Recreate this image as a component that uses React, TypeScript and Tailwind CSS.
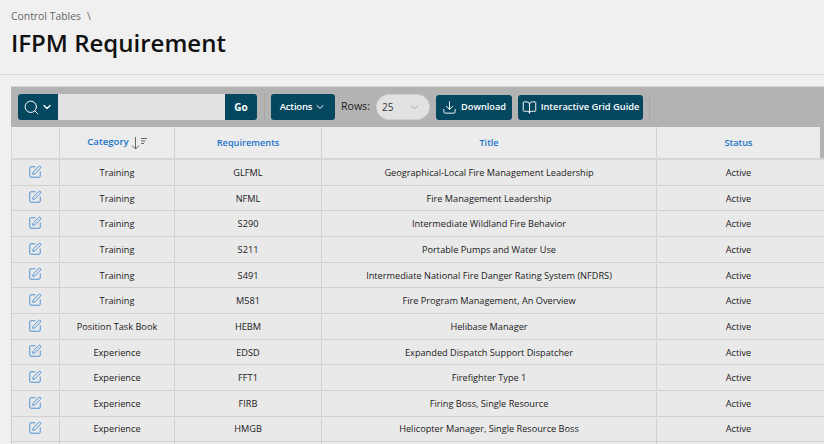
import React from 'react';
import { Search, ChevronDown, Download, BookOpen, SquarePen } from 'lucide-react';

const rows = [
  ['Training', 'GLFML', 'Geographical-Local Fire Management Leadership'],
  ['Training', 'NFML', 'Fire Management Leadership'],
  ['Training', 'S290', 'Intermediate Wildland Fire Behavior'],
  ['Training', 'S211', 'Portable Pumps and Water Use'],
  ['Training', 'S491', 'Intermediate National Fire Danger Rating System (NFDRS)'],
  ['Training', 'M581', 'Fire Program Management, An Overview'],
  ['Position Task Book', 'HEBM', 'Helibase Manager'],
  ['Experience', 'EDSD', 'Expanded Dispatch Support Dispatcher'],
  ['Experience', 'FFT1', 'Firefighter Type 1'],
  ['Experience', 'FIRB', 'Firing Boss, Single Resource'],
  ['Experience', 'HMGB', 'Helicopter Manager, Single Resource Boss'],
];

const cols = 'grid grid-cols-[48px_115px_147px_335px_167px]';
const cell = 'flex items-center justify-center border-r border-[#d0d0d0]';

const SortIcon = () => (
  <svg width="16" height="14" viewBox="0 0 16 14" fill="none" stroke="#666" strokeWidth="1">
    <path d="M4.5 1v12M1 9.5l3.5 3.5L8 9.5" />
    <path d="M10 2.5h6M10 5h4.5M10 7.5h3" />
  </svg>
);

export default function App() {
  return (
    <div className="h-[444px] w-[824px] overflow-hidden bg-[#f0f0f0] font-['Open_Sans',sans-serif] text-[#1a1a1a]">
      {/* Page title */}
      <header className="h-[75px] border-b border-[#d8d8d8] pl-[11px] pt-[8px]">
        <div className="flex gap-[6px] text-[10.4px] leading-[16px] text-[#666]">
          <span>Control Tables</span>
          <span>\</span>
        </div>
        <h1 className="mt-[1px] text-[24px] font-semibold leading-[36px] text-[#111]">IFPM Requirement</h1>
      </header>

      <div className="pl-[11px] pt-[11px]">
        {/* Toolbar */}
        <div className="flex h-[41px] items-center border-t border-[#d6d6d6] bg-[#b3b3b3] pl-[7px]">
          <button className="flex h-[26px] w-[40px] items-center justify-center gap-[1px] rounded-l-[3px] bg-[#05475f] text-white">
            <Search size={17} strokeWidth={1.4} />
            <ChevronDown size={12} strokeWidth={2.5} />
          </button>
          <div className="h-[26px] w-[167px] bg-[#e2e2e2]" />
          <button className="h-[26px] w-[32px] rounded-r-[3px] bg-[#05475f] text-[10px] font-bold text-white">Go</button>
          <div className="ml-[7px] mr-[6px] h-[26px] w-px bg-[#a6a6a6]" />
          <button className="flex h-[26px] w-[64px] items-center justify-center gap-[2px] rounded-[3px] bg-[#05475f] text-[9.5px] font-semibold tracking-[-0.2px] text-white">
            Actions
            <ChevronDown size={12} strokeWidth={2} />
          </button>
          <span className="ml-[6px] w-[30px] text-[10.6px] text-[#222]">Rows:</span>
          <div className="ml-[5px] flex h-[26px] w-[54px] items-center justify-between rounded-[13px] border border-[#d0d0d0] bg-[#e2e2e2] pl-[5px] pr-[9px] text-[10px] text-[#333]">
            25
            <ChevronDown size={11} strokeWidth={1.5} className="text-[#888]" />
          </div>
          <button className="ml-[6px] flex h-[25px] w-[76px] items-center justify-center gap-[4px] rounded-[3px] bg-[#05475f] text-[9.2px] font-semibold text-white">
            <Download size={15} strokeWidth={1.5} />
            Download
          </button>
          <button className="ml-[6px] flex h-[25px] w-[125px] items-center justify-center gap-[4px] rounded-[3px] bg-[#05475f] text-[9.3px] font-semibold text-white">
            <BookOpen size={15} strokeWidth={1.5} />
            Interactive Grid Guide
          </button>
          <div className="ml-[6px] h-[26px] w-px bg-[#a6a6a6]" />
        </div>

        {/* Grid header */}
        <div className={`${cols} h-[33px] border-b-2 border-l border-[#d6d6d6] bg-[#ececec] text-[9.2px] font-semibold text-[#1a73c9]`}>
          <div className={cell} />
          <div className={`${cell} gap-[2px]`}>
            <span className="text-[9.6px]">Category</span>
            <SortIcon />
          </div>
          <div className={cell}>Requirements</div>
          <div className={cell}>Title</div>
          <div className="relative flex items-center justify-center pr-[4px]">
            Status
            <div className="absolute right-0 top-0 h-full w-[4px] bg-[#b3b3b3]" />
          </div>
        </div>

        {/* Grid rows */}
        {rows.map((r) => (
          <div key={r[1]} className={`${cols} h-[25.67px] border-b border-l border-[#d0d0d0] bg-[#e9e9e9] pt-[1px] text-[9.2px] text-[#1a1a1a]`}>
            <div className={`${cell} pb-[2px] pr-[1px]`}>
              <SquarePen size={14} strokeWidth={1.4} className="text-[#2f7fcf]" />
            </div>
            <div className={cell}>{r[0]}</div>
            <div className={cell}>{r[1]}</div>
            <div className={cell}>{r[2]}</div>
            <div className="flex items-center justify-center pr-[4px]">Active</div>
          </div>
        ))}
        <div className={`${cols} h-[25.67px] border-l border-[#d0d0d0] bg-[#e9e9e9]`}>
          <div className={cell} />
          <div className={cell} />
          <div className={cell} />
          <div className={cell} />
          <div />
        </div>
      </div>
    </div>
  );
}
